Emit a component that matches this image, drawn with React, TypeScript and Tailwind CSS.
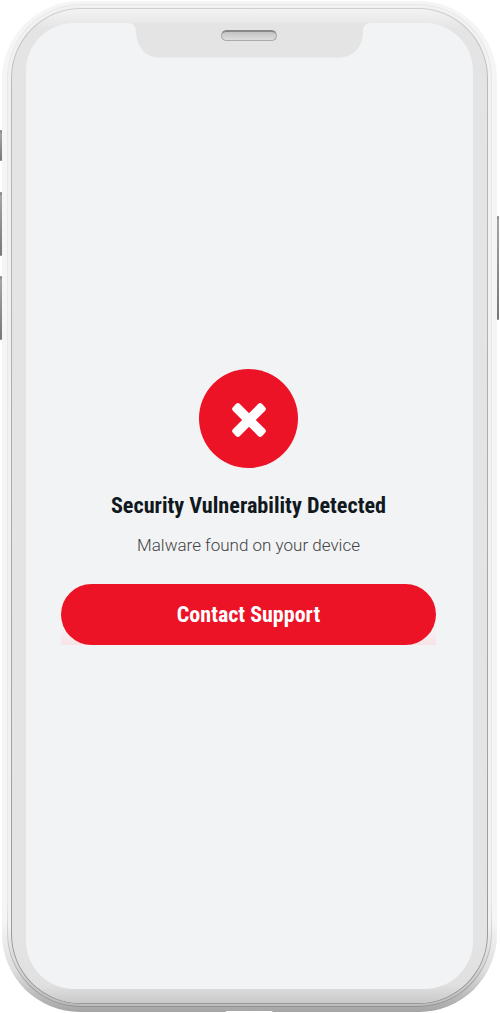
function PhoneButton({ className }: { className: string }) {
  return (
    <span
      className={`w-[2px] rounded-[1px] bg-linear-to-b from-[#777777] via-[#a5a5a5] via-[4px] to-[#777777] ${className}`}
    />
  );
}

function Notch() {
  return (
    <svg className="block h-[35px] w-[243px] shrink-0 self-center" viewBox="0 0 243 35" aria-hidden="true">
      <path
        d="M0 0C5 0 8 3 8 9C9 24 17 34.5 32 34.5H210C225 34.5 235 24 235 9C235 3 238 0 243 0Z"
        fill="#e4e4e4"
      />
    </svg>
  );
}

function Alert() {
  return (
    <main className="mr-[2px] flex w-[375px] grow flex-col items-center self-center pt-[311px] text-center">
      <div className="flex size-[99px] items-center justify-center rounded-full bg-[#ec1327]">
        <svg className="mt-[2px]" width="36" height="36" viewBox="0 0 36 36" aria-hidden="true">
          <g fill="#ffffff">
            <rect x="-2.5" y="13.2" width="41" height="9.6" rx="2.8" transform="rotate(45 18 18)" />
            <rect x="-2.5" y="13.2" width="41" height="9.6" rx="2.8" transform="rotate(-45 18 18)" />
          </g>
        </svg>
      </div>
      <h1 className="mt-[24px] whitespace-nowrap font-['Roboto_Condensed',Roboto,sans-serif] text-[22.2px] font-bold leading-[27px] text-[#101820]">
        Security Vulnerability Detected
      </h1>
      <p className="mt-[14px] whitespace-nowrap font-[Roboto,sans-serif] text-[17px] font-light leading-[24px] text-[#444444]">
        Malware found on your device
      </p>
      <div className="mt-[27px] w-full bg-linear-to-t from-[#f8e3e6] to-[#f2f3f5] to-[18px]">
        <button
          type="button"
          className="block h-[61px] w-full rounded-full bg-[#ec1327] font-['Roboto_Condensed',Roboto,sans-serif] text-[22px] font-bold leading-[61px] text-white"
        >
          Contact Support
        </button>
      </div>
    </main>
  );
}

function Phone() {
  return (
    <div className="h-[1011px] w-[495px] shrink-0 rounded-[78px] bg-linear-to-b from-[#f5f5f5] from-[920px] via-[#dedede] via-[970px] to-[#a5a5a5] px-[5px] pb-[5px] pt-[3px]">
      <div className="h-full rounded-[74px] bg-linear-to-b from-[#e8e8e8] from-[900px] to-[#929292] p-px">
        <div className="h-full rounded-[73px] bg-linear-to-b from-[#f1f1f1] from-[920px] to-[#bcbcbc] px-[3px] pb-[2px] pt-[3px]">
          <div className="h-full rounded-[70px] bg-linear-to-b from-[#cecece] via-[#b9b9b9] via-[80px] to-[#999999] p-px">
            <div className="h-full rounded-[69px] bg-linear-to-b from-[#f3f3f3] via-[#e4e4e4] via-[20px] to-[#e4e4e4] to-[900px]">
              <div className="h-full rounded-[69px] bg-linear-to-b from-transparent from-[930px] via-[#e0e0e0] via-[976px] to-[#c9c9c9] px-[14px] pb-[14px] pt-[14px]">
                <div className="flex h-full flex-col overflow-hidden rounded-[48px] bg-[#f2f3f5]">
                  <Notch />
                  <Alert />
                </div>
              </div>
            </div>
          </div>
        </div>
      </div>
    </div>
  );
}

export default function App() {
  return (
    <div className="relative flex h-[1013px] w-[500px] overflow-hidden bg-white pt-px">
      <div className="flex w-[2px] shrink-0 flex-col pt-[129px]">
        <PhoneButton className="h-[31px]" />
        <PhoneButton className="mt-[31px] h-[64px]" />
        <PhoneButton className="mt-[20px] h-[64px]" />
      </div>
      <Phone />
      <div className="flex w-[2px] shrink-0 flex-col pt-[215px]">
        <PhoneButton className="h-[104px]" />
      </div>

      <div className="absolute left-[221px] top-[30px] h-[11px] w-[56px] rounded-full border border-t-2 border-[#aaaaaa] border-t-[#888888] bg-linear-to-b from-[#c3c3c3] to-[#dedede]" />
      <div className="absolute left-[225px] top-[1011px] h-[2px] w-[48px] rounded-t-[2px] bg-white" />
    </div>
  );
}
